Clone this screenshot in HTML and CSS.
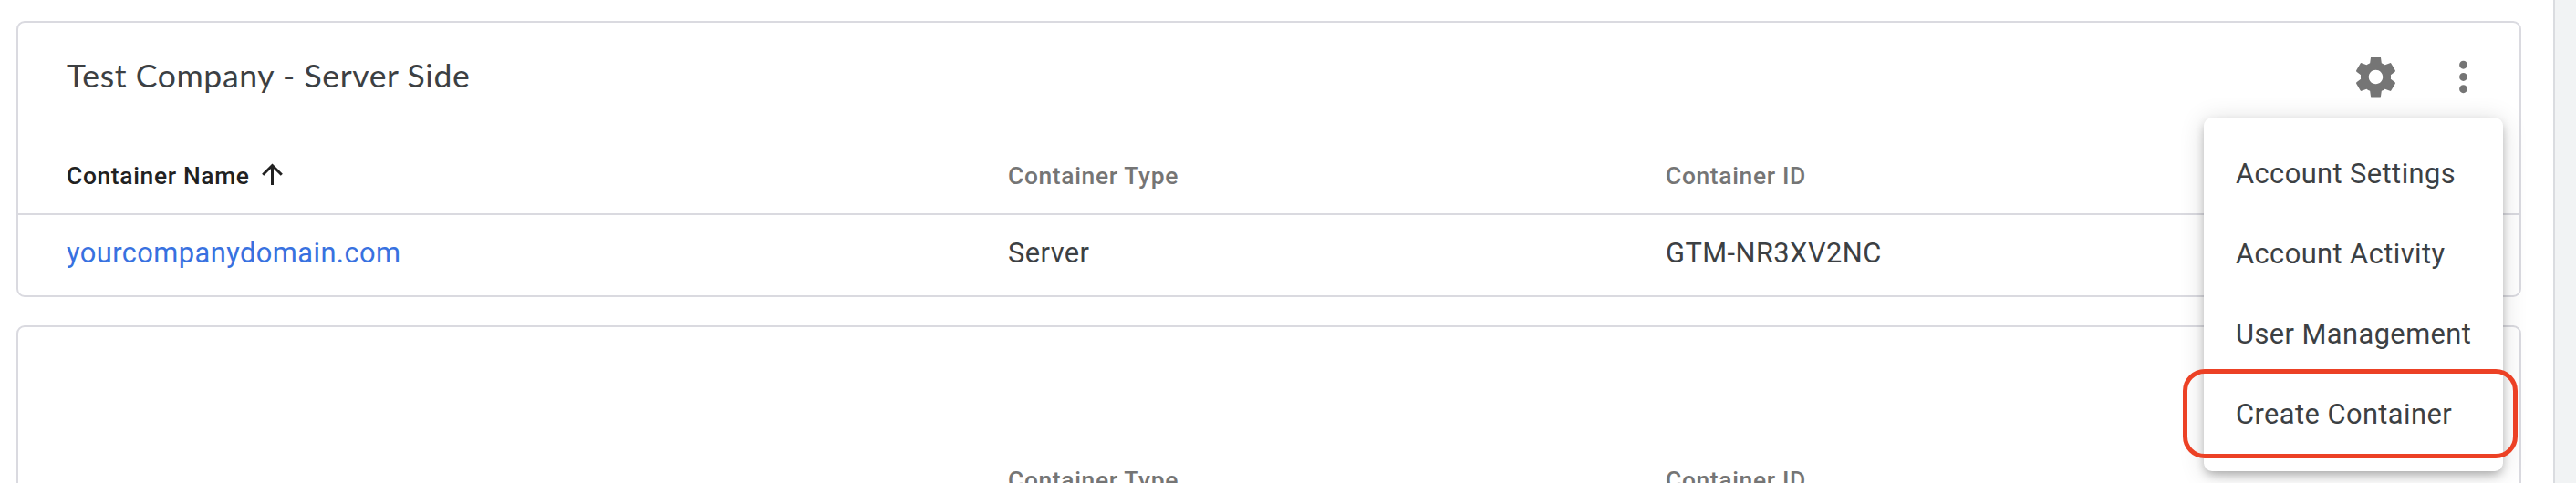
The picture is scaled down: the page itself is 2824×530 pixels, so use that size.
FILE: index.html
```html
<!DOCTYPE html>
<html lang="en">
<head>
    <meta charset="UTF-8">
    <meta name="viewport" content="width=device-width, initial-scale=1.0">
    <title>Accounts</title>
    <link rel="stylesheet" href="styles.css">
</head>
<body>

    <main class="accounts">
        <section class="card">
            <header class="card-header">
                <h2 class="card-title">Test Company - Server Side</h2>
                <div class="card-actions">
                    <button class="icon-button" aria-label="Settings">
                        <svg viewBox="0 0 24 24" fill="currentColor"><path d="M19.43 12.98c.04-.32.07-.64.07-.98s-.03-.66-.07-.98l2.11-1.65c.19-.15.24-.42.12-.64l-2-3.46c-.12-.22-.39-.3-.61-.22l-2.49 1c-.52-.4-1.08-.73-1.69-.98l-.38-2.65C14.46 2.18 14.25 2 14 2h-4c-.25 0-.46.18-.49.42l-.38 2.65c-.61.25-1.17.59-1.69.98l-2.49-1c-.23-.09-.49 0-.61.22l-2 3.46c-.13.22-.07.49.12.64l2.11 1.65c-.04.32-.07.65-.07.98s.03.66.07.98l-2.11 1.65c-.19.15-.24.42-.12.64l2 3.46c.12.22.39.3.61.22l2.49-1c.52.4 1.08.73 1.69.98l.38 2.65c.03.24.24.42.49.42h4c.25 0 .46-.18.49-.42l.38-2.65c.61-.25 1.17-.59 1.69-.98l2.49 1c.23.09.49 0 .61-.22l2-3.46c.12-.22.07-.49-.12-.64l-2.11-1.65zM12 15.5c-1.93 0-3.5-1.57-3.5-3.5s1.57-3.5 3.5-3.5 3.5 1.57 3.5 3.5-1.57 3.5-3.5 3.5z"/></svg>
                    </button>
                    <button class="icon-button" aria-label="More">
                        <svg viewBox="0 0 24 24" fill="currentColor"><path d="M12 8c1.1 0 2-.9 2-2s-.9-2-2-2-2 .9-2 2 .9 2 2 2zm0 2c-1.1 0-2 .9-2 2s.9 2 2 2 2-.9 2-2-.9-2-2-2zm0 6c-1.1 0-2 .9-2 2s.9 2 2 2 2-.9 2-2-.9-2-2-2z"/></svg>
                    </button>
                </div>
            </header>
            <div class="row row-head">
                <div class="sorted">
                    Container Name
                    <svg class="sort-icon" viewBox="0 0 23 24" fill="none" stroke="currentColor" stroke-width="3"><path d="M11.5 24V2.5M1.2 12.8L11.5 2.5l10.3 10.3"/></svg>
                </div>
                <div>Container Type</div>
                <div>Container ID</div>
            </div>
            <div class="row row-data">
                <div><a class="link" href="#">yourcompanydomain.com</a></div>
                <div>Server</div>
                <div>GTM-NR3XV2NC</div>
            </div>
        </section>

        <section class="card">
            <header class="card-header"></header>
            <div class="row row-head">
                <div></div>
                <div>Container Type</div>
                <div>Container ID</div>
            </div>
            <div class="row row-data"></div>
        </section>
    </main>

    <nav class="menu">
        <a class="menu-item">Account Settings</a>
        <a class="menu-item">Account Activity</a>
        <a class="menu-item">User Management</a>
        <a class="menu-item highlighted">Create Container</a>
    </nav>

</body>
</html>
```
FILE: styles.css
```css
*, *::after { box-sizing: border-box; }
body { margin: 0; height: 530px; overflow: hidden; background-color: #f1f3f4; color: #3c4043; font-family: Roboto, sans-serif; font-size: 30.8px; letter-spacing: 0.44px; }

/* Account list */
.accounts { width: 2801px; height: 530px; padding: 23px 37px 0 18px; overflow: hidden; background-color: #fff; border-right: 2px solid #dadce0; display: flex; flex-direction: column; gap: 31px; }
.card { flex: none; width: 2746px; height: 303px; border: 2px solid #dadae0; border-radius: 9px; }
.card-header { height: 121px; padding: 0 35px 3px 53px; display: flex; justify-content: space-between; align-items: center; }
.card-title { margin: 0; padding-bottom: 3px; font-family: Lato, sans-serif; font-size: 35.6px; font-weight: 400; letter-spacing: 0.6px; }
.card-actions { display: flex; gap: 43px; }
.icon-button { width: 53px; height: 53px; padding: 0; border: none; background: none; color: #757575; }
.icon-button svg { display: block; width: 100%; height: 100%; }

/* Container table */
.row { display: grid; grid-template-columns: 1032px 721px 1fr; align-items: center; padding-left: 53px; }
.row-head { height: 90px; padding-top: 6px; border-bottom: 2px solid #dadae0; color: #757575; font-size: 26.4px; font-weight: 500; letter-spacing: 0.66px; }
.row-data { height: 88px; padding-bottom: 6px; }
.sorted { display: flex; align-items: center; gap: 13px; color: #212121; }
.sort-icon { width: 23px; height: 24px; margin-bottom: 5px; }
.link { color: #3871e0; text-decoration: none; }

/* Account menu */
.menu { position: absolute; top: 129px; left: 2416px; width: 328px; padding: 18px 0; background-color: #fff; border-radius: 9px; box-shadow: 0 5px 11px -2px rgba(0, 0, 0, 0.3), 0 3px 28px rgba(0, 0, 0, 0.14); }
.menu-item { position: relative; display: flex; align-items: center; height: 88px; padding: 0 0 2px 35px; white-space: nowrap; }
.highlighted::after { content: ""; position: absolute; top: -6px; left: -23px; width: 367px; height: 98px; border: 5px solid #ec4125; border-radius: 24px; }
```
